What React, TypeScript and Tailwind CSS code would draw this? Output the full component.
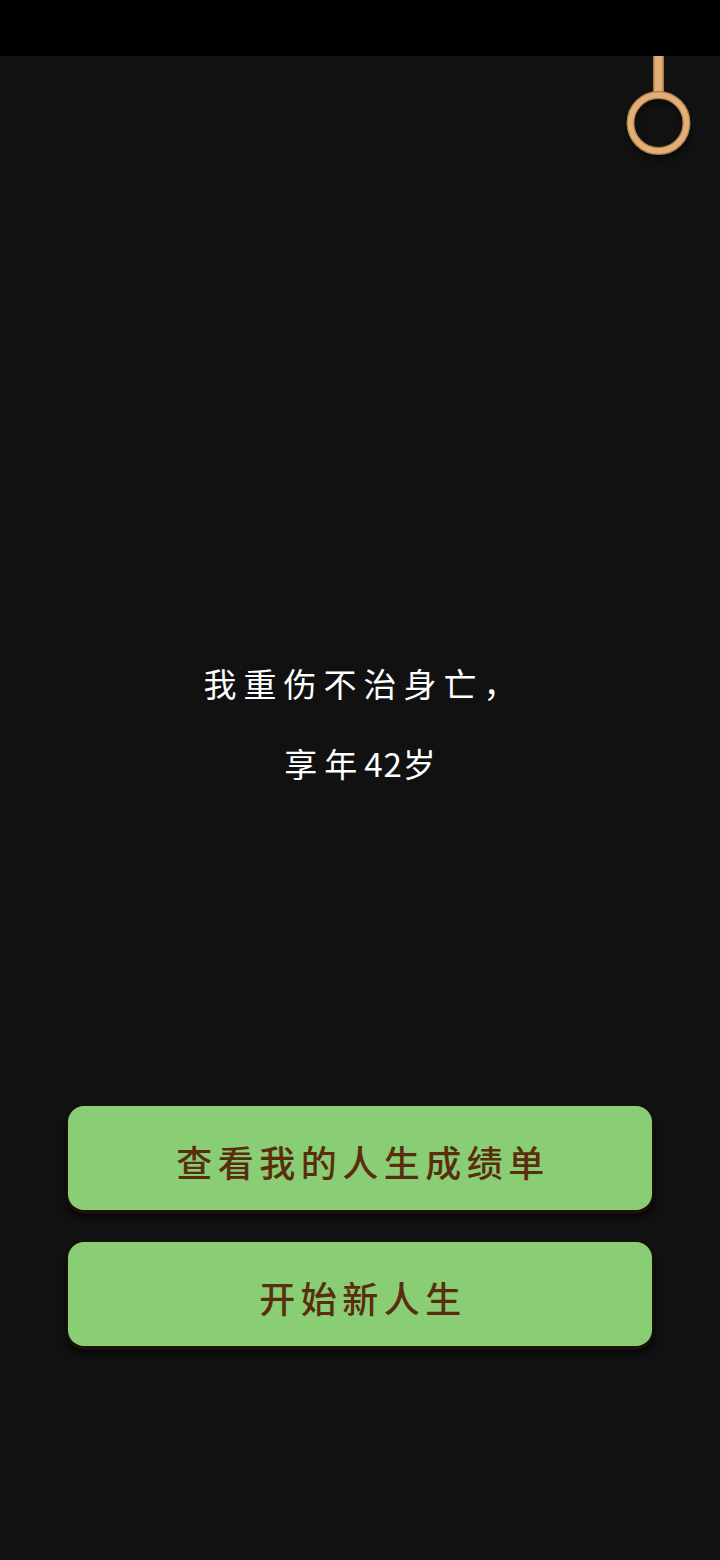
import React from 'react'

const FONT = "font-['Noto_Sans_CJK_SC','Noto_Sans_CJK_TC',sans-serif]"

function PullRing() {
  return (
    <svg className="absolute right-[16px] top-0" width="80" height="116" viewBox="0 0 80 116" fill="none">
      <defs>
        <filter id="ringShadow" x="-30%" y="-30%" width="160%" height="160%">
          <feGaussianBlur stdDeviation="2.5" />
        </filter>
      </defs>
      {/* soft shadow under the ring */}
      <circle cx="35" cy="72" r="28" stroke="#000" strokeWidth="8" opacity="0.35" filter="url(#ringShadow)" />
      <rect x="29" y="0" width="11" height="38" fill="#a07a4c" />
      <rect x="30.5" y="0" width="8" height="38" fill="#e3ae74" />
      <circle cx="34.5" cy="67" r="28" stroke="#a97e50" strokeWidth="8" />
      <circle cx="34.5" cy="67" r="28" stroke="#e4af75" strokeWidth="5.5" />
    </svg>
  )
}

function ActionButton({ label }: { label: string }) {
  return (
    <button className="flex h-[104px] w-full items-center justify-center rounded-[16px] bg-[#89ce75] pl-[6px] pt-[6px] text-[36px] font-medium tracking-[5.5px] text-[#5a2d0f] shadow-[0_0_0_1px_#1c1408,0_3px_0_1px_#1e1006,0_7px_6px_#060403]">
      {label}
    </button>
  )
}

export default function App() {
  return (
    <div className={`flex h-[1560px] w-[720px] flex-col overflow-hidden bg-[#111112] ${FONT}`}>
      <div className="h-[56px] flex-shrink-0 bg-black" />

      <div className="relative flex flex-1 flex-col">
        <PullRing />

        {/* death message */}
        <div className="pl-[7px] pt-[587px] text-center text-[33px] leading-[80px] tracking-[7px] text-white">
          <p>我重伤不治身亡，</p>
          <p>享年<span className="tracking-[1px]">42</span>岁</p>
        </div>

        <div className="mt-[303px] flex flex-col gap-[32px] px-[68px]">
          <ActionButton label="查看我的人生成绩单" />
          <ActionButton label="开始新人生" />
        </div>
      </div>
    </div>
  )
}
